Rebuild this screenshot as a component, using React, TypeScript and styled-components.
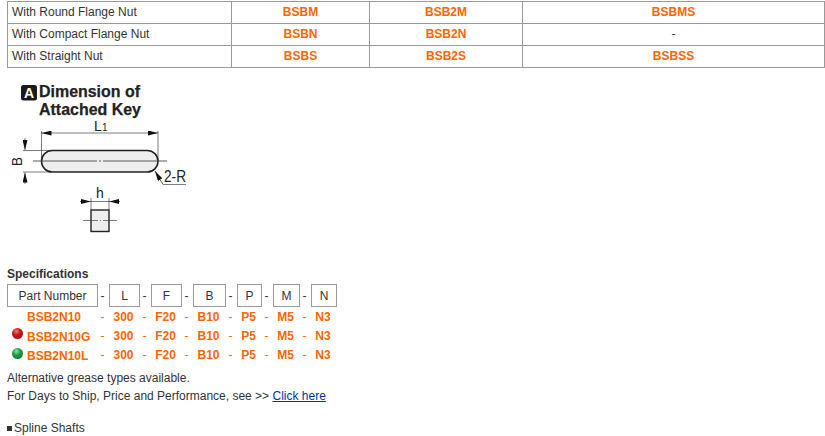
import React from "react";
import styled, { createGlobalStyle } from "styled-components";

const Global = createGlobalStyle`
  html, body { margin: 0; padding: 0; background: #fff; overflow: hidden; }
  body { font-family: "Liberation Sans", Arial, sans-serif; font-size: 12px; color: #333; }
`;

const Page = styled.div`
  width: 825px;
  height: 436px;
  overflow: hidden;
  padding: 1px 0 0 7px;
  box-sizing: border-box;
`;

const NutTable = styled.table`
  width: 818px;
  table-layout: fixed;
  border-collapse: collapse;
  border: 1px solid #999;
  border-right: 0;
`;

const NutRow = styled.tr`
  height: 22px;
`;

const LabelCell = styled.td`
  padding: 0 0 0 4px;
  border: 1px solid #999;
  box-sizing: border-box;
  line-height: 15px;
`;

const CodeCell = styled.td`
  padding: 0;
  border: 1px solid #999;
  text-align: center;
  font-weight: bold;
  color: #ff6600;
  line-height: 15px;
`;

const PlainCell = styled(CodeCell)`
  font-weight: normal;
  color: #333;
`;

const Figure = styled.svg`
  display: block;
  margin: 7px 0 0 -7px;
  width: 200px;
  height: 164px;
`;

const Heading = styled.div`
  margin-top: 28px;
  font-weight: bold;
  line-height: 15px;
`;

const SpecGrid = styled.div`
  display: grid;
  grid-template-columns: 91px 11px 31px 11px 31px 11px 33px 11px 25px 11px 27px 11px 26px;
  grid-template-rows: 23px 19.5px 19.5px 18.5px;
  margin-top: 2px;
  width: max-content;
  align-items: center;
  justify-items: center;
`;

const HeaderBox = styled.div`
  box-sizing: border-box;
  width: 100%;
  height: 23px;
  border: 1px solid #999;
  display: flex;
  align-items: center;
  justify-content: center;
`;

const Dash = styled.span`
  padding-right: 2px;
`;

const Value = styled.span`
  font-weight: bold;
  color: #ff6600;
  padding-right: 2px;
`;

const ValueDash = styled(Value)`
  font-weight: normal;
`;

const PartName = styled(Value)<{ $marked: boolean }>`
  justify-self: start;
  position: relative;
  padding-left: 20px;
  padding-top: ${(p) => (p.$marked ? "2px" : "0")};
`;

const Ball = styled.i<{ $tone: "red" | "green" }>`
  position: absolute;
  left: 5px;
  top: ${(p) => (p.$tone === "red" ? "0" : "1px")};
  width: 11px;
  height: 11px;
  border-radius: 50%;
  background: ${(p) =>
    p.$tone === "red"
      ? "radial-gradient(circle at 40% 30%, #f08080 0, #d01818 35%, #8e0a0a 100%)"
      : "radial-gradient(circle at 40% 30%, #90e0a0 0, #1f9a45 40%, #0c6a2c 100%)"};
`;

const Notes = styled.div`
  margin-top: 4px;
`;

const Note = styled.div`
  line-height: 18.5px;
`;

const Link = styled.a`
  color: #003399;
  text-decoration: underline;
`;

const Section = styled.div`
  margin-top: 15px;
  line-height: 15px;
`;

const Square = styled.span`
  display: inline-block;
  width: 5px;
  height: 5px;
  margin-right: 2px;
  background: #333;
  vertical-align: 1px;
`;

const nutRows = [
  ["With Round Flange Nut", "BSBM", "BSB2M", "BSBMS"],
  ["With Compact Flange Nut", "BSBN", "BSB2N", "-"],
  ["With Straight Nut", "BSBS", "BSB2S", "BSBSS"],
];

const headers = ["L", "F", "B", "P", "M", "N"];
const values = ["300", "F20", "B10", "P5", "M5", "N3"];
const parts: { name: string; tone?: "red" | "green" }[] = [
  { name: "BSB2N10" },
  { name: "BSB2N10G", tone: "red" },
  { name: "BSB2N10L", tone: "green" },
];

function KeyDrawing() {
  return (
    <Figure viewBox="0 75 200 164">
      <defs>
        <marker id="ar" viewBox="0 0 10 5" refX="10" refY="2.5" markerWidth="10" markerHeight="5" orient="auto-start-reverse" markerUnits="userSpaceOnUse">
          <path d="M0 0L10 2.5L0 5Z" fill="#111" />
        </marker>
      </defs>
      <rect x="21" y="85" width="16" height="15.5" rx="2.5" fill="#1a1a1a" />
      <text x="29" y="97.5" textAnchor="middle" fontFamily="Liberation Sans" fontWeight="bold" fontSize="14" fill="#fff">A</text>
      <g fontFamily="Liberation Sans" fontWeight="bold" fontSize="17" fill="#222" stroke="#222" strokeWidth="0.25">
        <text x="39" y="97" textLength="101" lengthAdjust="spacingAndGlyphs">Dimension of</text>
        <text x="39" y="114.5" textLength="102" lengthAdjust="spacingAndGlyphs">Attached Key</text>
      </g>

      <text x="94" y="130.5" fontFamily="Liberation Sans" fontSize="14" fill="#222">L</text>
      <text x="102" y="130.5" fontFamily="Liberation Sans" fontSize="10" fill="#222">1</text>

      <g stroke="#444" strokeWidth="0.7" fill="none">
        <path d="M41.5 131V160M158 131V160" />
        <path d="M41.5 133H158" markerStart="url(#ar)" markerEnd="url(#ar)" />
        <path d="M23 150.5H50M23 172H50" />
        <path d="M25 138V150" markerEnd="url(#ar)" />
        <path d="M25 184V172.5" markerEnd="url(#ar)" />
      </g>
      <rect x="41.5" y="150.5" width="116.5" height="21.5" rx="10.7" fill="#eee" stroke="#222" strokeWidth="1.5" />
      <path d="M33 161H97M99 161H101M103 161H167" stroke="#333" strokeWidth="0.8" fill="none" />
      <text transform="translate(22 161.5) rotate(-90)" textAnchor="middle" fontFamily="Liberation Sans" fontSize="14" fill="#222">B</text>

      <path d="M163 184.5L155 171" stroke="#222" strokeWidth="0.8" fill="none" markerEnd="url(#ar)" />
      <path d="M163 184.5H186" stroke="#444" strokeWidth="0.7" fill="none" />
      <text x="164" y="182" fontFamily="Liberation Sans" fontSize="16" fill="#222" textLength="22" lengthAdjust="spacingAndGlyphs">2-R</text>

      <text x="100" y="198" textAnchor="middle" fontFamily="Liberation Sans" fontSize="14" fill="#222">h</text>
      <g stroke="#444" strokeWidth="0.7" fill="none">
        <path d="M80 201.5H91" markerEnd="url(#ar)" />
        <path d="M120 201.5H109" markerEnd="url(#ar)" />
        <path d="M91 201.5H109" />
        <path d="M91 198V210M109 198V210" />
      </g>
      <rect x="91" y="210" width="18" height="21.5" fill="#eee" stroke="#222" strokeWidth="1.4" />
      <path d="M83 220.5H98M100 220.5H101M103 220.5H117" stroke="#444" strokeWidth="0.7" fill="none" />
    </Figure>
  );
}

export default function App() {
  return (
    <Page>
      <Global />
      <NutTable>
        <colgroup>
          <col style={{ width: 224 }} />
          <col style={{ width: 138 }} />
          <col style={{ width: 153 }} />
          <col />
        </colgroup>
        <tbody>
          {nutRows.map((r) => (
            <NutRow key={r[0]}>
              <LabelCell>{r[0]}</LabelCell>
              <CodeCell>{r[1]}</CodeCell>
              <CodeCell>{r[2]}</CodeCell>
              {r[3] === "-" ? <PlainCell>-</PlainCell> : <CodeCell>{r[3]}</CodeCell>}
            </NutRow>
          ))}
        </tbody>
      </NutTable>
      <KeyDrawing />
      <Heading>Specifications</Heading>
      <SpecGrid>
        <HeaderBox>Part Number</HeaderBox>
        {headers.map((h) => (
          <React.Fragment key={h}>
            <Dash>-</Dash>
            <HeaderBox>{h}</HeaderBox>
          </React.Fragment>
        ))}
        {parts.map((p) => (
          <React.Fragment key={p.name}>
            <PartName $marked={!!p.tone}>
              {p.tone && <Ball $tone={p.tone} />}
              {p.name}
            </PartName>
            {values.map((v) => (
              <React.Fragment key={v}>
                <ValueDash>-</ValueDash>
                <Value>{v}</Value>
              </React.Fragment>
            ))}
          </React.Fragment>
        ))}
      </SpecGrid>
      <Notes>
        <Note>Alternative grease types available.</Note>
        <Note>
          For Days to Ship, Price and Performance, see &gt;&gt; <Link href="#">Click here</Link>
        </Note>
      </Notes>
      <Section>
        <Square />Spline Shafts
      </Section>
    </Page>
  );
}
